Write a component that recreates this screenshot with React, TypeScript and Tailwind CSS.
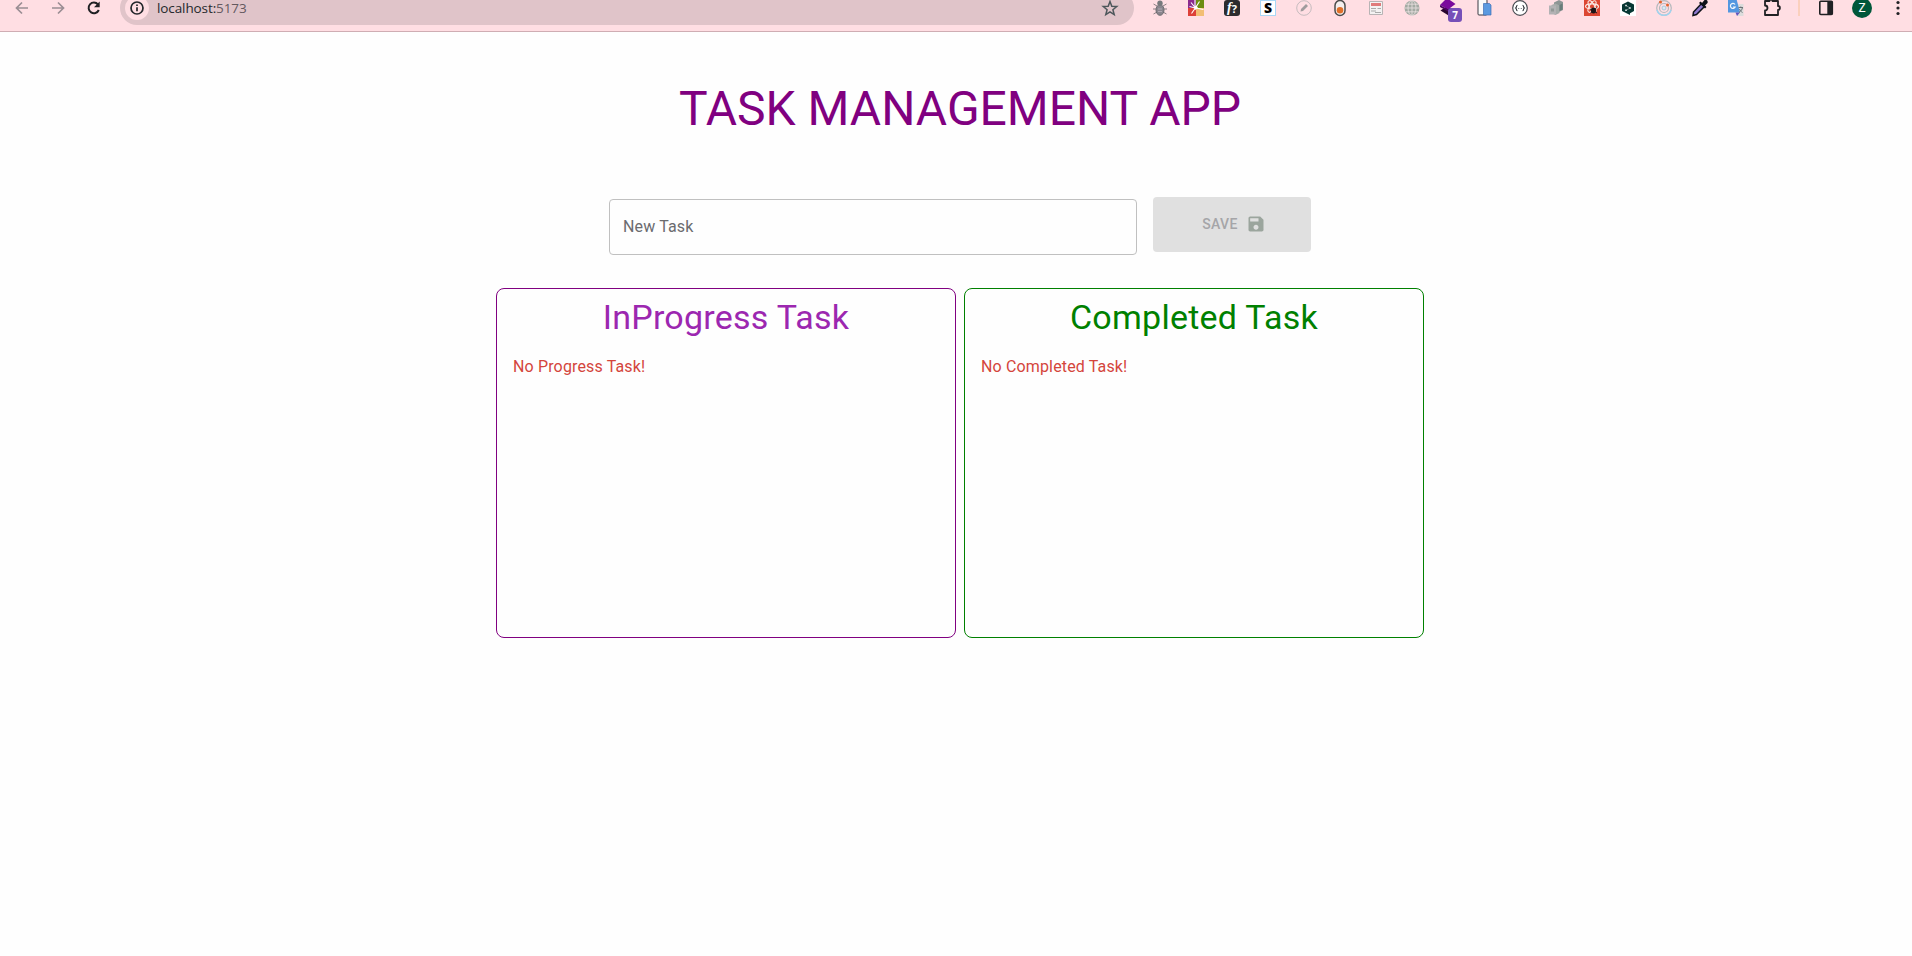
import type { ReactNode } from 'react';

function Slot({ children }: { children: ReactNode }) {
  return <div className="flex h-6 w-9 shrink-0 items-center justify-center">{children}</div>;
}

function Svg({ children }: { children: ReactNode }) {
  return (
    <svg width="16" height="16" viewBox="0 0 16 16" fill="none" className="shrink-0 overflow-visible">
      {children}
    </svg>
  );
}

const extensions: ReactNode[] = [
  // bug
  <Svg>
    <g stroke="#8b7f84" strokeWidth="1">
      <path d="M5 6 1.500 4M11 6l3.500-2M4 9H1M12 9h3M5 12l-3.500 2M11 12l3.500 2" />
      <ellipse cx="8" cy="10" rx="4" ry="5.300" fill="#8a858d" stroke="#6b6c70" />
      <circle cx="8" cy="3.200" r="2.700" fill="#76797c" stroke="none" />
      <path d="M6 9h4M6 11.500h4" stroke="#b1a9b2" />
    </g>
  </Svg>,
  // four colour tile
  <Svg>
    <path fill="#8a2a8e" d="M0 0h8v8H0z" />
    <path fill="#6d8d12" d="M8 0h8v8H8z" />
    <path fill="#dd4038" d="M0 8h8v8H0z" />
    <path fill="#f2be74" d="M8 8h8v8H8z" />
    <path d="m3 2.500 4 5M7 0v6M11.500 1.500 8 7M15.500 9.500 8 8M3.500 13.500 7 8.500M1.500 6.500 7 8" stroke="#fff" strokeWidth="1.100" />
    <path d="m6 6.500 2.500-1L10 8l-3 2z" fill="#fff" />
  </Svg>,
  // f?
  <div className="flex size-4 items-center justify-center rounded-[3px] bg-[#2c2c2e] font-['Liberation_Serif',serif] text-[14px] leading-none font-bold text-white">
    <span className="italic">f</span>
    <span className="font-['Open_Sans',sans-serif] text-[11px]">?</span>
  </div>,
  // S
  <div className="flex size-4 items-center justify-center border border-[#a9d7f5] bg-white font-['Open_Sans',sans-serif] text-[14px] leading-none font-extrabold text-black">
    S
  </div>,
  // disabled pencil
  <Svg>
    <circle cx="8" cy="8" r="7.300" stroke="#c6bcbf" />
    <path d="m4.500 11.500.5-2.500 5-5L12 6l-5 5z" fill="#a09b9d" />
  </Svg>,
  // toggle
  <Svg>
    <rect x="3" y=".5" width="10" height="15" rx="5" fill="#f4eeee" stroke="#4c4c4c" strokeWidth="1.500" />
    <circle cx="8" cy="10.200" r="3.300" fill="#e0702a" />
  </Svg>,
  // newspaper
  <Svg>
    <path d="M1.500 1.500h13v13h-13z" fill="#f4f2f2" stroke="#b8b4b5" />
    <path d="M3 3h10v3H3z" fill="#e07b7b" />
    <path d="M3 8.500h5M9.500 8.500H13M3 11h5M7 12.500h6" stroke="#aaa" strokeWidth="1.200" />
  </Svg>,
  // globe
  <Svg>
    <circle cx="8" cy="8" r="7.500" fill="#a3aaa3" />
    <path d="M8 .5v15M.5 8h15M1.800 4.200h12.400M1.800 11.800h12.400" stroke="#e5dcdc" strokeWidth=".9" />
    <ellipse cx="8" cy="8" rx="4" ry="7.500" stroke="#e5dcdc" strokeWidth=".9" />
  </Svg>,
  // layers with counter
  <div className="relative size-4">
    <Svg>
      <path d="m6.500 6.500 9 4-7 5-8-5z" fill="#28062f" />
      <path d="M7-2 15.500 4 8 9.500 0 5z" fill="#7a0a9c" />
      <path d="m0 5 8 4.500v2L0 7z" fill="#4b0560" />
    </Svg>
    <span className="absolute top-[8px] left-[8px] flex size-3.5 items-center justify-center rounded-[3px] bg-[#7650b8] font-['Open_Sans',sans-serif] text-[10px] leading-none font-bold text-white">
      7
    </span>
  </div>,
  // devices
  <Svg>
    <rect x="2" y="-.5" width="9" height="15.500" rx="1" fill="#fafafa" stroke="#3b3b42" />
    <path d="M7.500 3.500h6l1.500 1.500v10H7.500z" fill="#5b9ae0" stroke="#3e6fb5" strokeWidth=".7" />
  </Svg>,
  // braces in a circle
  <Svg>
    <circle cx="8" cy="8" r="7.300" fill="#fff" stroke="#4b4e54" strokeWidth="1.200" />
    <path d="M5.500 5.200c-1.500 0-.5 2-1.800 2.800 1.300.8.300 2.800 1.800 2.800M10.500 5.200c1.500 0 .5 2 1.800 2.800-1.300.8-.3 2.800-1.800 2.800M6.400 8.500h.8M8.800 8.500h.8" stroke="#33363c" strokeWidth="1.100" />
  </Svg>,
  // stacked cubes
  <Svg>
    <path d="M6 2.500 11 0l4 2v8l-4 2-5-2z" fill="#8d9594" />
    <path d="m3.500 5 4-1.500 4 2V13l-4 2-4-2z" fill="#a5aaa8" />
    <path d="M1 5.500h7v9H1z" fill="#b3b2b4" />
    <path d="M3 8.500h3v3H3z" fill="#929896" />
    <path d="m11.500 5 3-1.500v6l-3 1.500z" fill="#697d7a" />
  </Svg>,
  // react dev tile with a bug
  <Svg>
    <path fill="#dc4632" d="M0 0h16v16H0z" />
    <g stroke="#f9e9e5" strokeWidth="1.100">
      <ellipse cx="8" cy="6.500" rx="6.500" ry="2.600" />
      <ellipse cx="8" cy="6.500" rx="6.500" ry="2.600" transform="rotate(60 8 6.500)" />
      <ellipse cx="8" cy="6.500" rx="6.500" ry="2.600" transform="rotate(120 8 6.500)" />
    </g>
    <ellipse cx="9.500" cy="10.500" rx="2.600" ry="2.900" fill="#1c1517" />
    <path d="m6 9 7 4M6.500 13l6-5" stroke="#1c1517" />
  </Svg>,
  // hexagon
  <Svg>
    <path fill="#fff" d="M0 0h16v16H0z" />
    <path d="m8 1.500 6 3V11l-4 2.300V15l-3-1.500L2 11V4.500z" fill="#063834" />
    <path d="M6 5.500 10 8 6 10.300" stroke="#7d9895" strokeWidth=".8" />
    <path d="M5.300 4.800h1.400v1.400H5.300zM9.300 7.300h1.400v1.400H9.300zM5.300 9.500h1.400v1.400H5.300z" fill="#fff" />
  </Svg>,
  // orbit
  <Svg>
    <circle cx="8" cy="8" r="7.300" stroke="#b5b9bd" strokeWidth="1.200" />
    <path d="M1 10a7.300 7.300 0 0 0 14 0" stroke="#a0d3ee" strokeWidth="1.500" />
    <circle cx="8" cy="8" r="4.500" stroke="#b5b9bd" strokeWidth="1.200" />
    <circle cx="8" cy="8" r="2" fill="#dceaf2" stroke="#a8c9da" />
    <circle cx="4.500" cy="2" r="1.500" fill="#e4632e" />
    <circle cx="11.500" cy="5" r="1.500" fill="#e4632e" />
  </Svg>,
  // eyedropper
  <Svg>
    <path d="m9.500 3.500 3 3-8 8-3.500 1 .5-3.500z" fill="#8d78cf" stroke="#0e1219" strokeWidth="1.500" />
    <path d="m7 3 1.500-1.500L10 3l2.500-3c1.500-1 4 1 3 3L13 5.500l1.500 1.500L13 8.500z" fill="#0e1219" />
  </Svg>,
  // translate
  <Svg>
    <path d="M6 4h9.500v12H9z" fill="#dcdcdc" />
    <path d="M0-1h8.500L12 12.500H0z" fill="#5397e0" />
    <path d="M7.500 12.500H12L9 16z" fill="#6354bd" />
    <path d="M7 4.500A2.500 2.500 0 1 0 7.200 7H5" stroke="#f1f6fc" strokeWidth="1.200" />
    <path d="M10.500 7.500H15M12.800 6.500v1M14.500 7.500c-.5 2.500-2 4-3.500 5M11.500 9c.5 1.500 1.500 2.500 3 3.500" stroke="#6b7376" />
  </Svg>,
];

function BrowserBar() {
  return (
    <header className="h-8 overflow-hidden border-b border-[#cfadb3] bg-[#ffdee3]">
      <div className="-mt-[9px] flex h-[34px] items-center pl-1">
        <Slot>
          <Svg>
            <path d="M14 8H3M8 2.500 2.500 8 8 13.500" stroke="#9b8e94" strokeWidth="1.700" />
          </Svg>
        </Slot>
        <Slot>
          <Svg>
            <path d="M2 8h11M8 2.500 13.500 8 8 13.500" stroke="#9b8e94" strokeWidth="1.700" />
          </Svg>
        </Slot>
        <Slot>
          <Svg>
            <path d="M12.800 10A5.300 5.300 0 1 1 12 4.500" stroke="#202124" strokeWidth="2" />
            <path d="M13.700 1.500v5.700H8z" fill="#202124" />
          </Svg>
        </Slot>
        <div className="ml-2 flex h-[34px] w-[1014px] shrink-0 items-center rounded-full bg-[#e0c4c9] pl-[5px]">
          <div className="flex size-6 items-center justify-center rounded-full bg-[#ffdee3]">
            <Svg>
              <circle cx="8" cy="8" r="6" stroke="#24272b" strokeWidth="1.700" />
              <path d="M8 7.200v4M8 4.500v1.600" stroke="#24272b" strokeWidth="1.700" />
            </Svg>
          </div>
          <span className="ml-2 grow font-['Open_Sans',sans-serif] text-[13.500px] leading-4 tracking-[-0.100px] text-[#25282c]">
            localhost:<span className="text-[#64595f]">5173</span>
          </span>
          <div className="mr-4 flex">
            <Svg>
              <path d="m8 1.500 1.800 4.700 5 .3-3.900 3.200 1.300 4.900L8 11.900l-4.200 2.700 1.300-4.900L1.200 6.500l5-.3z" stroke="#4d575b" strokeWidth="1.500" />
            </Svg>
          </div>
        </div>
        <div className="ml-2 flex shrink-0 items-center">
          {extensions.map((icon, i) => (
            <Slot key={i}>{icon}</Slot>
          ))}
          <Slot>
            <Svg>
              <path d="M1 1h4.500a1.500 1.500 0 0 1 3 0H14v5a1.900 1.900 0 0 1 0 3.800V15H1v-4.500a2.500 2.500 0 0 0 0-5z" stroke="#202124" strokeWidth="1.800" strokeLinejoin="round" />
            </Svg>
          </Slot>
          <div className="mx-2 h-4 w-0.5 bg-[#fbd0bd]" />
          <Slot>
            <Svg>
              <rect x="1.800" y="1.300" width="12.500" height="13.200" rx="1" stroke="#202124" strokeWidth="1.600" />
              <path d="M9.300 1h5v14h-5z" fill="#202124" />
            </Svg>
          </Slot>
          <Slot>
            <div className="flex size-5 items-center justify-center rounded-full bg-[#00573a] font-['Roboto',sans-serif] text-[12px] leading-none text-white">Z</div>
          </Slot>
          <Slot>
            <Svg>
              <circle cx="8" cy="2.500" r="1.600" fill="#202124" />
              <circle cx="8" cy="8" r="1.600" fill="#202124" />
              <circle cx="8" cy="13.500" r="1.600" fill="#202124" />
            </Svg>
          </Slot>
        </div>
      </div>
    </header>
  );
}

export default function App() {
  return (
    <div className="min-h-screen w-full overflow-hidden bg-[#fefefe] font-['Roboto',sans-serif]">
      <BrowserBar />
      <main className="flex w-[1920px] flex-col items-center pt-[49px]">
        <h1 className="text-[48px] leading-[56px] font-normal text-[#800080]">TASK MANAGEMENT APP</h1>
        <form className="mt-[60px] flex items-start gap-4" onSubmit={(e) => e.preventDefault()}>
          <input
            type="text"
            placeholder="New Task"
            className="mt-[2px] h-14 w-[528px] rounded border border-[#c0c0c0] bg-transparent px-[13px] pb-0.5 text-base tracking-[0.150px] text-[#333] outline-none placeholder:text-[#6b6b6f]"
          />
          <button
            type="submit"
            disabled
            className="flex h-[55px] w-[158px] items-center justify-center gap-2 rounded bg-[#e0e0e0] pb-0.5 pl-1 text-[14px] leading-6 font-medium tracking-[0.400px] text-[#a5a5a8]"
          >
            SAVE
            <svg width="20" height="20" viewBox="0 0 24 24" fill="#9ba59d">
              <path d="M17 3H5c-1.110 0-2 .9-2 2v14c0 1.100.89 2 2 2h14c1.100 0 2-.9 2-2V7l-4-4zm-5 16c-1.660 0-3-1.340-3-3s1.340-3 3-3 3 1.340 3 3-1.340 3-3 3zm3-10H5V5h10v4z" />
            </svg>
          </button>
        </form>
        <div className="mt-[33px] flex gap-2">
          <section className="h-[350px] w-[460px] rounded-lg border border-[#800080] px-4 pt-[7px]">
            <h2 className="text-center text-[34px] leading-[42px] font-normal tracking-[0.250px] text-[#9c27b0]">InProgress Task</h2>
            <p className="mt-[17px] text-base leading-6 tracking-[0.150px] text-[#d4453c]">No Progress Task!</p>
          </section>
          <section className="h-[350px] w-[460px] rounded-lg border border-[#008000] px-4 pt-[7px]">
            <h2 className="text-center text-[34px] leading-[42px] font-normal tracking-[0.250px] text-[#008000]">Completed Task</h2>
            <p className="mt-[17px] text-base leading-6 tracking-[0.150px] text-[#d4453c]">No Completed Task!</p>
          </section>
        </div>
      </main>
    </div>
  );
}
